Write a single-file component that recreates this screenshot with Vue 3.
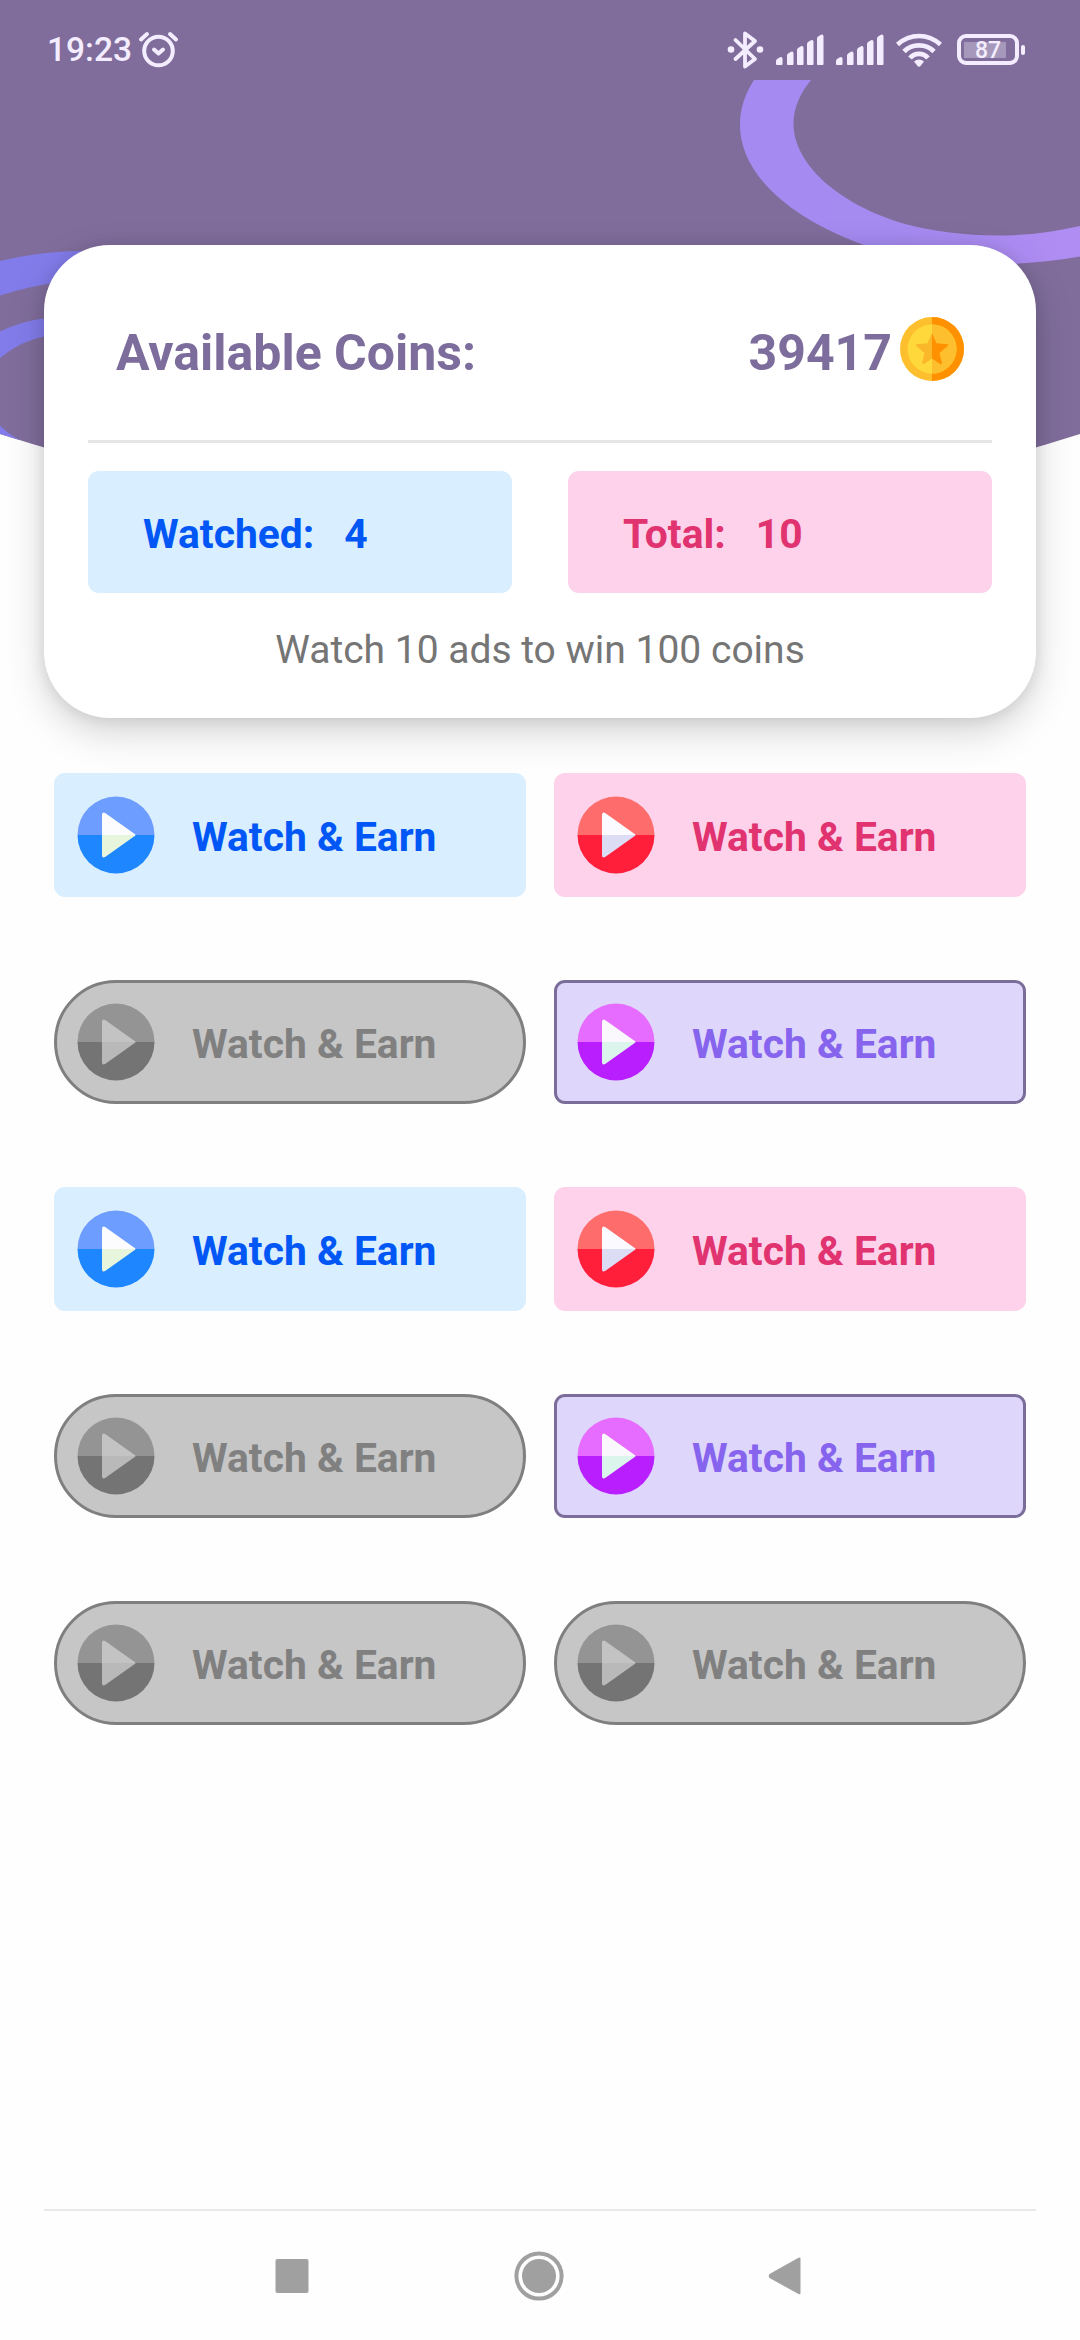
<script setup>
const themes = {
  blue: { top: '#6c9dff', bottom: '#1e87ff', playTop: '#fcfcff', playBottom: '#e6f5dc' },
  pink: { top: '#ff6c6c', bottom: '#ff1f3b', playTop: '#fafaff', playBottom: '#dcdcf5' },
  gray: { top: '#949494', bottom: '#747474', playTop: '#c3c3c3', playBottom: '#b9b9b9' },
  purple: { top: '#e66cff', bottom: '#b91eff', playTop: '#faf8fc', playBottom: '#dcf5ec' },
}

const buttons = ['blue', 'pink', 'gray', 'purple', 'blue', 'pink', 'gray', 'purple', 'gray', 'gray']
const signals = [0, 1]
const bars = [
  { x: 0, y: 23, h: 8 },
  { x: 11, y: 17.5, h: 13.5 },
  { x: 21, y: 12, h: 19 },
  { x: 31, y: 6, h: 25 },
  { x: 41, y: 0.5, h: 30.5 },
]
</script>

<template>
  <div class="screen">
    <svg class="backdrop" viewBox="0 0 1080 520" width="1080" height="520" aria-hidden="true">
      <defs>
        <clipPath id="dome"><path d="M0 0H1080V434Q810 520 540 520Q270 520 0 434Z" /></clipPath>
        <linearGradient id="ring" x1="740" x2="1080" y1="0" y2="0" gradientUnits="userSpaceOnUse">
          <stop offset="0" stop-color="#a58af2" />
          <stop offset=".45" stop-color="#a58af0" />
          <stop offset="1" stop-color="#b08df3" />
        </linearGradient>
      </defs>
      <g clip-path="url(#dome)">
        <rect width="1080" height="520" fill="#806d9c" />
        <path
          fill="url(#ring)"
          d="M754 80C745 94 740 108 740 125C740 170 782 215 864 245C930 270 1010 268 1080 256.500V226C1020 240 960 238 905 224C837 204 793.500 163 793.500 124C793.500 107 801 92 811 80Z"
        />
        <path fill="#827cea" d="M0 261Q42 251 84 251L60 282Q30 286 0 295.500Z" />
        <path fill="#827cea" d="M0 331.500Q22 321 46 318V336Q20 341 0 358Z" />
        <path fill="#827cea" d="M0 425.500Q8 434 20 440L0 440Z" />
      </g>
    </svg>

    <header class="status">
      <div class="status-left">
        <span class="clock">19:23</span>
        <svg class="alarm" width="42" height="38" viewBox="0 0 42 38" fill="none" stroke="#f4edff" stroke-linecap="round" stroke-linejoin="round">
          <circle cx="20.500" cy="20" r="14.300" stroke-width="4" />
          <path stroke-width="4" d="M3 8.500L9 3M32 3L38 8.500M16 18.500L20.500 22.500L25 18.500" />
        </svg>
      </div>
      <div class="status-right">
        <svg class="bluetooth" width="38" height="40" viewBox="0 0 38 40">
          <path d="M8.500 10L28 29L18 36.500V3.500L28 11L8.500 29" fill="none" stroke="#f4edff" stroke-width="3.800" stroke-linejoin="round" stroke-linecap="round" />
          <circle cx="4" cy="19.500" r="3.300" fill="#f4edff" />
          <circle cx="33" cy="19.500" r="3.300" fill="#f4edff" />
        </svg>
        <svg v-for="s in signals" :key="s" class="signal" width="48" height="32" viewBox="0 0 48 32" fill="#f4edff">
          <path v-for="b in bars" :key="b.x" :d="`M${b.x} ${b.y + 4}Q${b.x} ${b.y + 2.5} ${b.x + 1.500} ${b.y + 1.700}L${b.x + 4} ${b.y + .3}Q${b.x + 6.500} ${b.y - .5} ${b.x + 6.500} ${b.y + 2}V${b.y + b.h - 1}q0 1 -1 1h-4.500q-1 0 -1 -1Z`" />
        </svg>
        <svg class="wifi" width="46" height="34" viewBox="0 0 46 34">
          <g fill="none" stroke="#f4edff" stroke-width="4.700">
            <path d="M1.500 11.500Q11 3 23 3T44.500 11.500" />
            <path d="M8 18.500Q14 12.300 23 12.300T38 18.500" />
            <path d="M14 25Q17.500 20.800 23 20.800T32 25" />
          </g>
          <path fill="#f4edff" d="M18 28.500Q23 24.500 28 28.500L24.500 33Q23 34.300 21.500 33Z" />
        </svg>
        <div class="battery"><span class="level"></span><span class="percent">87</span></div>
        <span class="battery-tip"></span>
      </div>
    </header>

    <section class="card">
      <div class="balance">
        <span>Available Coins:</span>
        <span class="amount">
          <span>39417</span>
          <svg width="64" height="64" viewBox="0 0 64 64" aria-hidden="true">
            <circle cx="32" cy="32" r="32" fill="#fdbf2e" />
            <path d="M32 0a32 32 0 0 1 0 64Z" fill="#ff9100" />
            <circle cx="32" cy="32" r="24.500" fill="#ffd93b" />
            <path d="M32 7.500a24.500 24.500 0 0 1 0 49Z" fill="#fdbf2e" />
            <path d="M32 16L27.500 26.300L16.300 27.300Q15.500 28 16.300 29L24.500 36L22 46Q22.500 47.500 24 47L32 41.500Z" fill="#fbb72a" />
            <path d="M32 16L36.500 26.300L47.700 27.300Q48.500 28 47.700 29L39.500 36L42 46Q41.500 47.500 40 47L32 41.500Z" fill="#ff9100" />
          </svg>
        </span>
      </div>
      <hr class="divider" />
      <div class="stats">
        <div class="stat blue"><span>Watched:</span><span>4</span></div>
        <div class="stat pink"><span>Total:</span><span>10</span></div>
      </div>
      <p class="hint">Watch 10 ads to win 100 coins</p>
    </section>

    <main class="grid">
      <button v-for="(name, i) in buttons" :key="i" class="watch" :class="name" type="button">
        <svg width="78" height="78" viewBox="0 0 78 78" aria-hidden="true">
          <path d="M0.500 39a38.500 38.500 0 0 1 77 0Z" :fill="themes[name].top" />
          <path d="M0.500 39a38.500 38.500 0 0 0 77 0Z" :fill="themes[name].bottom" />
          <path d="M25 39V19Q25 15 28.500 17.200L57 37.500Q58.500 38.300 58.500 39Z" :fill="themes[name].playTop" />
          <path d="M25 39V59Q25 63 28.500 60.800L57 40.500Q58.500 39.700 58.500 39Z" :fill="themes[name].playBottom" />
        </svg>
        <span>Watch &amp; Earn</span>
      </button>
    </main>

    <footer class="bottom">
      <div class="rule"></div>
      <nav class="nav">
        <svg width="34" height="34" viewBox="0 0 34 34"><rect width="33" height="34" x=".5" rx="2" fill="#a0a0a0" /></svg>
        <svg width="50" height="50" viewBox="0 0 50 50">
          <circle cx="25" cy="25" r="22.600" fill="none" stroke="#a0a0a0" stroke-width="4" />
          <circle cx="25" cy="25" r="17" fill="#a0a0a0" />
        </svg>
        <svg width="34" height="38" viewBox="0 0 34 38"><path d="M30.500 .8Q32.500 0 32.500 2V36Q32.500 38 30.500 37L1.500 21Q0 19 1.500 17Z" fill="#a0a0a0" /></svg>
      </nav>
    </footer>
  </div>
</template>

<style>
body {
  margin: 0;
  background: #fefefe;
}
</style>

<style scoped>
.screen {
  position: relative;
  display: flex;
  flex-direction: column;
  box-sizing: border-box;
  width: 1080px;
  height: 2340px;
  overflow: hidden;
  background: #fefefe;
  font-family: Roboto, sans-serif;
}
.backdrop {
  position: absolute;
  top: 0;
  left: 0;
}
.status {
  position: relative;
  display: flex;
  justify-content: space-between;
  box-sizing: border-box;
  height: 100px;
  padding: 0 55px 0 47px;
  color: #f4edff;
}
.status-left,
.status-right {
  display: flex;
  align-items: center;
  height: 99px;
}
.clock {
  font-size: 33.5px;
  font-weight: 500;
  line-height: 40px;
}
.alarm {
  margin-left: 6px;
}
.bluetooth {
  margin-right: 11px;
}
.signal {
  margin-right: 12px;
}
.wifi {
  margin-right: 15px;
}
.battery {
  display: grid;
  place-items: center;
  box-sizing: border-box;
  width: 62px;
  height: 31px;
  border: 4px solid #f4edff;
  border-radius: 9px;
}
.level,
.percent {
  grid-area: 1 / 1;
}
.level {
  justify-self: start;
  width: 42px;
  height: 16px;
  margin-left: 3px;
  background: #a698bb;
}
.percent {
  margin-top: 1px;
  font-size: 23px;
  font-weight: 500;
  line-height: 23px;
}
.battery-tip {
  width: 4px;
  height: 10px;
  margin-left: 2px;
  border-radius: 2px;
  background: #f4edff;
}
.card {
  position: relative;
  box-sizing: border-box;
  height: 473px;
  margin: 145px 44px 0;
  padding: 0 44px;
  border-radius: 66px;
  background: #fff;
  box-shadow: 0 14px 38px rgba(0, 0, 0, 0.17), 0 1px 16px rgba(0, 0, 0, 0.1);
}
.balance {
  display: flex;
  align-items: center;
  justify-content: space-between;
  box-sizing: border-box;
  height: 195px;
  padding: 20px 28px 0;
  color: #7d6d9c;
  font-size: 50px;
  font-weight: 700;
}
.amount {
  display: flex;
  align-items: center;
  gap: 8px;
}
.amount svg {
  margin-top: -7px;
}
.divider {
  height: 3px;
  margin: 0;
  border: 0;
  background: #e6e6e6;
}
.stats {
  display: grid;
  grid-template-columns: 1fr 1fr;
  gap: 56px;
  margin-top: 28px;
}
.stat {
  display: flex;
  align-items: center;
  gap: 30px;
  box-sizing: border-box;
  height: 122px;
  padding: 4px 0 0 55px;
  border-radius: 11px;
  font-size: 40.8px;
  font-weight: 700;
}
.hint {
  margin: 34px 0 0;
  color: #757575;
  font-size: 39px;
  line-height: 46px;
  text-align: center;
}
.blue {
  background: #d9eefe;
  color: #0057f5;
}
.pink {
  background: #fdd2ea;
  color: #e0336f;
}
.purple {
  border: 3px solid #7a6d9a;
  background: #dfd7fb;
  color: #8664ee;
}
.gray {
  border: 3px solid #7f7f7f;
  background: #c6c6c6;
  color: #808080;
}
.grid {
  display: grid;
  grid-template-columns: 472px 472px;
  gap: 83px 28px;
  margin: 55px 54px 0;
}
.watch {
  display: flex;
  align-items: center;
  box-sizing: border-box;
  height: 124px;
  padding: 0 0 0 23px;
  border-width: 0;
  border-radius: 11px;
  font-family: inherit;
  font-size: 40.8px;
  font-weight: 700;
}
.watch.purple,
.watch.gray {
  padding-left: 20px;
  border-width: 3px;
}
.watch.gray {
  border-radius: 62px;
}
.watch span {
  margin: 4px 0 0 37px;
}
.bottom {
  margin-top: auto;
  height: 131px;
}
.rule {
  height: 2px;
  margin: 0 44px;
  background: #e9e9e9;
}
.nav {
  display: flex;
  align-items: center;
  justify-content: space-between;
  height: 129px;
  padding: 0 278px 0 275px;
}
</style>
